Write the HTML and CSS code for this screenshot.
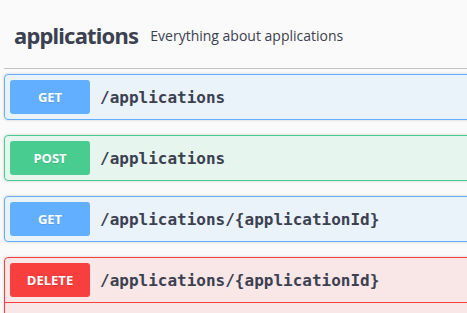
FILE: index.html
```html
<html>
  <head>
    <link rel="stylesheet" href="styles.css">
  </head>
  <body>
    <div class="wrapper">
      <h4 class="tag">
        <span class="tag-name">applications</span>
        <small class="tag-desc">Everything about applications</small>
      </h4>
      <div class="opblock get">
        <div class="summary">
          <span class="method">GET</span>
          <span class="path">/applications</span>
        </div>
      </div>
      <div class="opblock post">
        <div class="summary">
          <span class="method">POST</span>
          <span class="path">/applications</span>
        </div>
      </div>
      <div class="opblock get">
        <div class="summary">
          <span class="method">GET</span>
          <span class="path">/applications/{applicationId}</span>
        </div>
      </div>
      <div class="opblock delete open">
        <div class="summary">
          <span class="method">DELETE</span>
          <span class="path">/applications/{applicationId}</span>
        </div>
        <div class="body"></div>
      </div>
    </div>
  </body>
</html>
```

FILE: styles.css
```css
html, body {
  margin: 0;
  overflow: hidden;
  background: #fafafa;
}
.wrapper {
  width: 640px;
  padding: 8px 0 0 4px;
  font-family: "Open Sans", sans-serif;
  color: #3b4151;
}
.tag {
  display: flex;
  align-items: center;
  margin: 0 0 5px;
  padding: 10px 20px 16px 10px;
  border-bottom: 1px solid rgba(59, 65, 81, .3);
  font-weight: normal;
}
.tag-name {
  font-family: "Noto Sans", sans-serif;
  font-size: 22px;
  font-weight: 700;
  letter-spacing: -0.8px;
  line-height: 34px;
}
.tag-desc {
  font-size: 14px;
  padding-left: 12px;
}
.opblock {
  margin: 0 0 15px;
  border: 1px solid #000;
  border-radius: 4px;
  box-shadow: 0 0 3px rgba(0, 0, 0, .19);
}
.summary {
  display: flex;
  align-items: center;
  padding: 5px;
}
.method {
  min-width: 80px;
  height: 34px;
  line-height: 34px;
  box-sizing: border-box;
  border-radius: 3px;
  text-align: center;
  color: #fff;
  font-size: 13px;
  font-weight: 700;
  text-shadow: 0 1px 0 rgba(0, 0, 0, .1);
}
.path {
  padding: 0 10px;
  font-family: "DejaVu Sans Mono", monospace;
  font-size: 16px;
  font-weight: 600;
  color: #3b4151;
}
.get {
  background: rgba(97, 175, 254, .1);
  border-color: #61affe;
}
.get .method {
  background: #61affe;
}
.post {
  background: rgba(73, 204, 144, .1);
  border-color: #49cc90;
}
.post .method {
  background: #49cc90;
}
.delete {
  background: rgba(249, 62, 62, .1);
  border-color: #f93e3e;
}
.delete .method {
  background: #f93e3e;
}
.open .summary {
  border-bottom: 1px solid #f93e3e;
}
.body {
  height: 40px;
}
```
